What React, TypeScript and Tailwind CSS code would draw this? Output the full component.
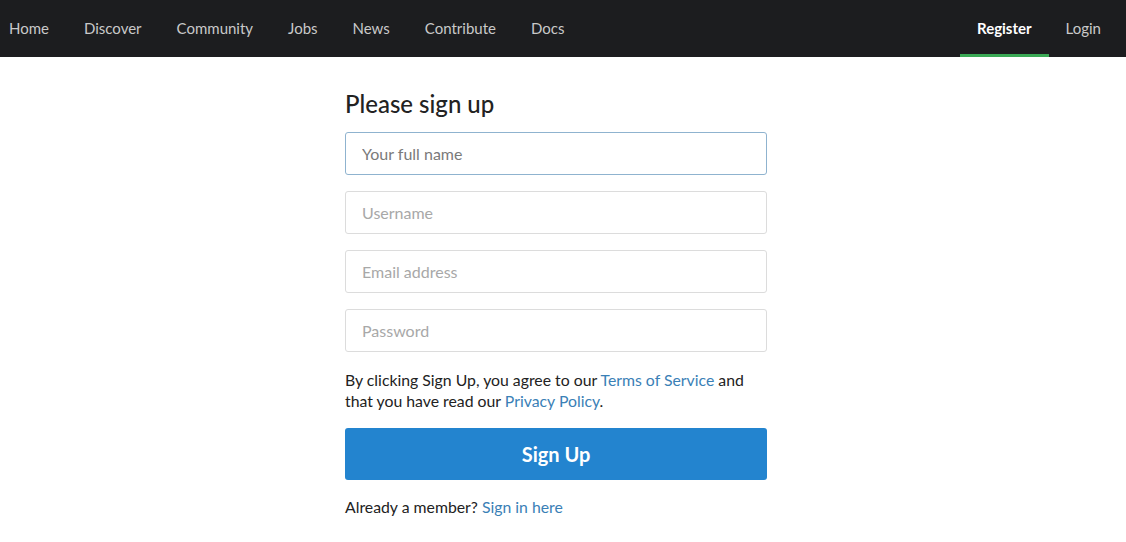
import React from "react";

const navItems = ["Home", "Discover", "Community", "Jobs", "News", "Contribute", "Docs"];

const Field = ({ placeholder, focused }: { placeholder: string; focused?: boolean }) => (
  <input
    type="text"
    placeholder={placeholder}
    className={
      "h-[43px] w-full rounded-[3px] border bg-white px-4 text-[16px] outline-none " +
      (focused
        ? "border-[#8fb3cf] placeholder:text-[#7a7a7a]"
        : "border-[#dcdcdc] placeholder:text-[#a8a8a8]")
    }
  />
);

const App = () => {
  return (
    <div className="min-h-[542px] bg-white font-['Lato','Liberation_Sans',sans-serif] text-[#222]">
      <nav className="flex h-[57px] items-stretch justify-between bg-[#1c1d1f] text-[15px]">
        <ul className="flex items-center gap-[35px] pl-[9px] text-[#c9c9c9]">
          {navItems.map((item) => (
            <li key={item}>
              <a href="#">{item}</a>
            </li>
          ))}
        </ul>
        <ul className="flex items-stretch pr-[8px]">
          <li className="flex items-center border-b-[3px] border-[#3aa955] px-[17px] pt-[3px] font-bold text-white">
            <a href="#">Register</a>
          </li>
          <li className="flex items-center px-[17px] text-[#c9c9c9]">
            <a href="#">Login</a>
          </li>
        </ul>
      </nav>

      <main className="flex justify-center pr-[14px]">
        <form className="w-[422px] pt-[31px]" onSubmit={(e) => e.preventDefault()}>
          <h1 className="text-[24px] leading-[32px] font-medium text-[#222]">Please sign up</h1>
          <div className="mt-[12px] flex flex-col gap-4">
            <Field placeholder="Your full name" focused />
            <Field placeholder="Username" />
            <Field placeholder="Email address" />
            <Field placeholder="Password" />
          </div>
          <p className="mt-[17px] text-[15.8px] leading-[21px]">
            By clicking Sign Up, you agree to our{" "}
            <a href="#" className="text-[#3a80b6]">
              Terms of Service
            </a>{" "}
            and that you have read our{" "}
            <a href="#" className="text-[#3a80b6]">
              Privacy Policy
            </a>
            .
          </p>
          <button
            type="submit"
            className="mt-[17px] h-[52px] w-full rounded-[3px] bg-[#2384cf] text-[20px] font-bold text-white"
          >
            Sign Up
          </button>
          <p className="mt-[15px] text-[15.8px]">
            Already a member?{" "}
            <a href="#" className="text-[#3a80b6]">
              Sign in here
            </a>
          </p>
        </form>
      </main>
    </div>
  );
};

export default App;
